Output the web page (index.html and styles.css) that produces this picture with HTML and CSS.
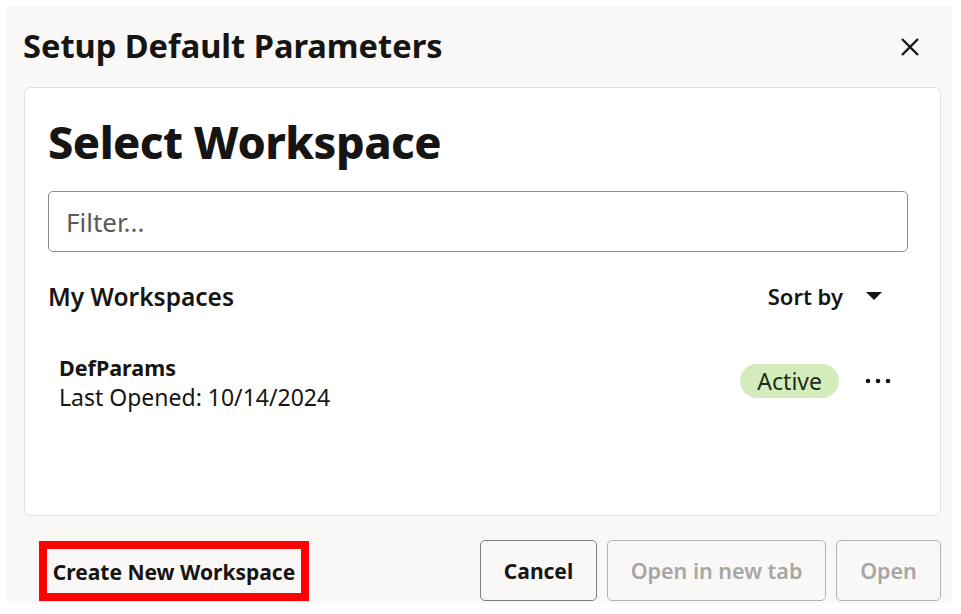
FILE: index.html
```html
<!DOCTYPE html>
<html>
<head>
<meta charset="utf-8">
<link rel="stylesheet" href="styles.css">
</head>
<body>
<div class="dialog">
  <div class="dialog-header">
    <h1 class="dialog-title">Setup Default Parameters</h1>
    <button class="close-btn" aria-label="Close">
      <svg width="20" height="20" viewBox="0 0 20 20"><path d="M2 2 L18 18 M18 2 L2 18" stroke="#161513" stroke-width="2.4" fill="none"/></svg>
    </button>
  </div>
  <div class="card">
    <h2 class="card-title">Select Workspace</h2>
    <div class="filter">Filter...</div>
    <div class="list-head">
      <span class="list-title">My Workspaces</span>
      <span class="sort">Sort by
        <svg class="caret" width="16" height="8" viewBox="0 0 16 8"><path d="M0 0 H16 L8 8 Z" fill="#161513"/></svg>
      </span>
    </div>
    <div class="ws-row">
      <div class="ws-info">
        <div class="ws-name">DefParams</div>
        <div class="ws-date">Last Opened: 10/14/2024</div>
      </div>
      <span class="badge">Active</span>
      <svg class="more" width="26" height="6" viewBox="0 0 26 6"><circle cx="3" cy="3" r="2.3" fill="#161513"/><circle cx="13" cy="3" r="2.3" fill="#161513"/><circle cx="23" cy="3" r="2.3" fill="#161513"/></svg>
    </div>
  </div>
  <div class="footer">
    <button class="create-btn">Create New Workspace</button>
    <div class="actions">
      <button class="btn">Cancel</button>
      <button class="btn disabled btn-tab">Open in new tab</button>
      <button class="btn disabled btn-open">Open</button>
    </div>
  </div>
</div>
</body>
</html>
```
FILE: styles.css
```css
html, body {
  margin: 0;
  padding: 0;
  background: #ffffff;
}
body {
  font-family: "Noto Sans", "Open Sans", sans-serif;
  color: #161513;
  width: 961px;
  height: 614px;
  overflow: hidden;
}
.dialog {
  margin: 6px 9px 0 7px;
  width: 945px;
  height: 597px;
  background: #f9f8f6;
  display: flex;
  flex-direction: column;
  box-sizing: border-box;
}
.dialog-header {
  display: flex;
  align-items: center;
  justify-content: space-between;
  height: 81px;
  padding: 0 32px 0 16px;
  box-sizing: border-box;
}
.dialog-title {
  margin: 0;
  font-size: 32.6px;
  font-weight: 700;
  line-height: 1;
  padding-top: 0;
}
.close-btn {
  border: 0;
  background: none;
  padding: 0;
  width: 20px;
  height: 20px;
  display: flex;
  margin-top: 1px;
}
.card {
  margin: 0 11px 0 17px;
  height: 429px;
  background: #ffffff;
  border: 1px solid #e2e0dd;
  border-radius: 7px;
  box-sizing: border-box;
  padding: 0 49px 0 23px;
  display: flex;
  flex-direction: column;
}
.card-title {
  margin: 25px 0 0 0;
  font-size: 45px;
  font-weight: 800;
  line-height: 58px;
  letter-spacing: -0.5px;
}
.filter {
  margin-top: 20px;
  margin-right: -17px;
  height: 61px;
  border: 1px solid #8c8b89;
  border-radius: 5px;
  box-sizing: border-box;
  display: flex;
  align-items: center;
  padding-left: 17px;
  font-size: 26px;
  color: #5b5a58;
}
.list-head {
  display: flex;
  justify-content: space-between;
  align-items: center;
  margin-top: 27px;
  height: 34px;
}
.list-title {
  font-size: 24.5px;
  font-weight: 600;
}
.sort {
  font-size: 22px;
  font-weight: 600;
  display: flex;
  align-items: center;
  gap: 23px;
  margin-right: 9px;
}
.ws-row {
  display: flex;
  align-items: center;
  margin-top: 41px;
  padding-left: 11px;
}
.ws-info {
  flex: 1;
}
.ws-name {
  font-size: 21.5px;
  font-weight: 700;
  line-height: 28px;
}
.ws-date {
  font-size: 23px;
  line-height: 30px;
}
.badge {
  background: #d4ebbc;
  border-radius: 17px;
  height: 34px;
  padding: 0 17px;
  display: flex;
  align-items: center;
  font-size: 23px;
  color: #1d2b17;
  margin-top: -5px;
}
.more {
  margin-left: 26px;
  margin-right: 0;
  margin-top: -5px;
}
.footer {
  display: flex;
  justify-content: space-between;
  align-items: center;
  padding: 0 11px 0 32px;
  margin-top: 24px;
}
button {
  font-family: inherit;
}
.create-btn {
  border: 8px solid #ff0000;
  background: #f9f8f6;
  height: 60px;
  width: 270px;
  box-sizing: border-box;
  padding: 0;
  font-size: 21px;
  font-weight: 700;
  color: #161513;
  padding-top: 2px;
}
.actions {
  display: flex;
  gap: 10px;
}
.btn {
  height: 61px;
  border: 1px solid #7f7e7c;
  border-radius: 5px;
  background: #f9f8f6;
  font-size: 21px;
  font-weight: 700;
  color: #161513;
  box-sizing: border-box;
  width: 117px;
  padding: 0;
}
.btn.disabled {
  border-color: #b6b4b2;
  color: #a8a6a3;
  font-weight: 600;
  font-size: 21.5px;
}
.btn-tab { width: 219px; }
.btn-open { width: 105px; }
```
